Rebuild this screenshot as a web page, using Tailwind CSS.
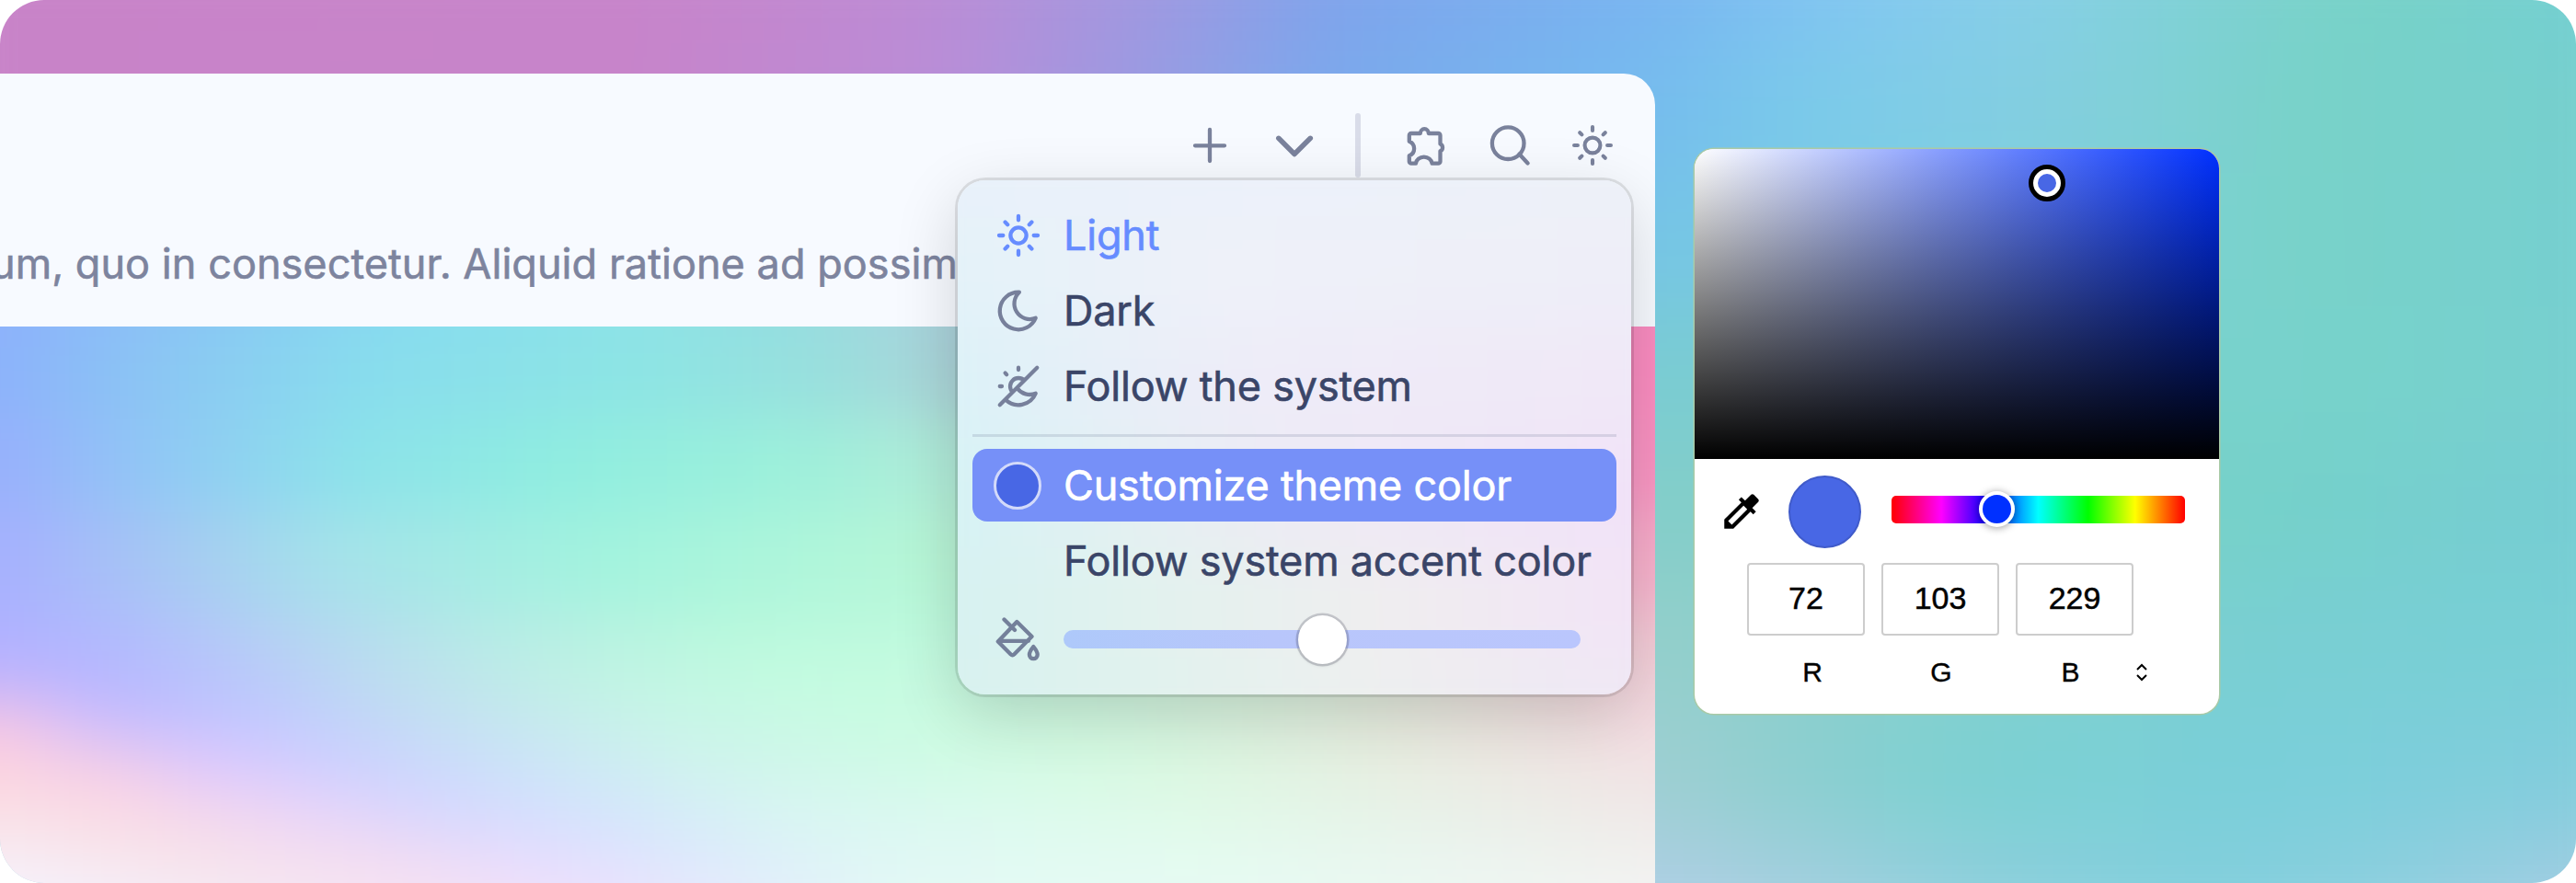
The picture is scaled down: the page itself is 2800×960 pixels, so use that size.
<!DOCTYPE html>
<html lang="en">
<head>
<meta charset="utf-8">
<title>Theme settings</title>
<script src="https://cdn.jsdelivr.net/npm/@tailwindcss/browser@4"></script>
</head>
<body class="bg-white">
<main class="relative isolate flex h-[960px] w-[2800px] items-start overflow-hidden rounded-[48px] font-['Inter','Liberation_Sans',sans-serif]">
  <!-- backdrop -->
  <div class="absolute -inset-[100px] -z-10 flex flex-col blur-[50px]">
    <div class="flex-1 bg-[linear-gradient(to_right,#c883c8_100px,#c784ca_800px,#bd8bd4_1100px,#a098e0_1350px,#7ea3ec_1550px,#78b4f1_1890px,#82c6f2_2100px,#87cfe8_2300px,#7ed1d4_2500px,#77d2c6_2660px,#74cfd2_2900px)]"></div>
    <div class="flex-1 bg-[linear-gradient(to_right,#c883c8_100px,#c784ca_800px,#b98dd8_1130px,#9b9ae2_1330px,#7aa9ec_1550px,#75bcee_1899px,#7acaea_2050px,#82cde4_2250px,#82d0d9_2400px,#78d2c8_2600px,#76cfce_2900px)]"></div>
    <div class="flex-1 bg-[linear-gradient(to_right,#c883c8_100px,#75c5e6_1899px,#7cd0e0_2200px,#7bd2d0_2500px,#78d2c8_2600px,#76cfd0_2900px)]"></div>
    <div class="flex-1 bg-[linear-gradient(to_right,#75c5e6_100px,#7accd2_1899px,#78d2cc_2500px,#77d2cb_2700px,#77cfd0_2900px)]"></div>
    <div class="flex-1 bg-[linear-gradient(to_right,#84cec8_100px,#84cec9_1899px,#75d1c9_2550px,#76cdd3_2900px)]"></div>
    <div class="flex-1 bg-[linear-gradient(to_right,#93cfcb_100px,#93cfcb_1899px,#79cfd2_2530px,#78cfd6_2900px)]"></div>
    <div class="flex-1 bg-[linear-gradient(to_right,#9fcfd2_100px,#9fcfd2_1899px,#8ccfcf_2050px,#7bd0d2_2250px,#7acfda_2600px,#82cddc_2900px)]"></div>
    <div class="flex-1 bg-[linear-gradient(to_right,#b0cfe6_100px,#b0cfe6_1899px,#a6cfe0_2050px,#90cfdd_2250px,#82cfdd_2500px,#8fcfdf_2700px,#a5cde3_2900px)]"></div>
  </div>

  <!-- application window -->
  <section class="relative mt-20 flex h-[880px] w-[1799px] shrink-0 flex-col overflow-hidden rounded-tr-[34px]">
    <header class="h-[275px] shrink-0 bg-[#f7faff]">
      <div class="flex h-[156px] items-center justify-end pr-[45px] text-[#7a829c]">
        <svg class="mr-[44px] size-12" viewBox="0 0 48 48" fill="none" stroke="currentColor" stroke-width="4.300" stroke-linecap="round"><path d="M24 7v34M8 24.300h32"/></svg>
        <svg class="mr-[42px] size-12" viewBox="0 0 48 48" fill="none" stroke="currentColor" stroke-width="5.500" stroke-linecap="round" stroke-linejoin="round"><path d="M6.800 16.300 24 33.500 41.300 16.300"/></svg>
        <div class="mr-[47px] h-[70px] w-[6px] rounded-full bg-[#d9dce9]"></div>
        <svg class="mr-[43px] size-12" viewBox="0 0 48 48" fill="none" stroke="currentColor" stroke-width="4.300" stroke-linejoin="round"><path d="M8 11H17.800a4.500 4.800 0 0 1 9 0H37.300a2.200 2.200 0 0 1 2.200 2.200V22.500a4 4.200 0 0 1 0 7.800V41.500a2.200 2.200 0 0 1-2.200 2.200H30.600a8.900 8 0 0 0-17.700 0H8a2.200 2.200 0 0 1-2.200-2.200V35.200a8.300 8.300 0 0 0 0-15.500V13.200A2.200 2.200 0 0 1 8 11Z"/></svg>
        <svg class="mr-[43px] size-12" viewBox="0 0 48 48" fill="none" stroke="currentColor" stroke-width="4.300" stroke-linecap="round"><circle cx="22.200" cy="21.700" r="17.300"/><path d="m34.400 33.500 9.200 10"/></svg>
        <svg class="size-[46px]" viewBox="0 0 48 48" fill="none" stroke="currentColor" stroke-width="4.300" stroke-linecap="round"><circle cx="24" cy="24" r="8.800"/><path d="M24 3.200v4M24 40.800v4M3.200 24h4M40.800 24h4M9.600 9.600l2.300 2.300M36.100 36.100l2.300 2.300M9.600 38.400l2.300-2.300M36.100 11.900l2.300-2.300"/></svg>
      </div>
      <p class="-ml-[10px] whitespace-nowrap text-[45px] leading-[102px] tracking-[0.05px] text-[#7d849e] [-webkit-text-stroke:0.6px_#7d849e]">um, quo in consectetur. Aliquid ratione ad possimus</p>
    </header>
    <div class="relative isolate flex-1 overflow-hidden">
      <div class="absolute -inset-[100px] -z-10 flex flex-col blur-[32px]">
        <div class="flex-2 bg-[linear-gradient(to_right,#8eb1fc_100px,#88c6f4_330px,#86dcf0_560px,#8ce2e8_790px,#94dce0_960px,#a8d2de_1120px,#d5a5c8_1500px,#f98bc0_1890px)]"></div>
        <div class="flex-2 bg-[linear-gradient(to_right,#8cb2fb_100px,#8bc4f4_250px,#88dded_500px,#8de5e4_800px,#99dfdd_1000px,#aad4d8_1130px,#d5a5c8_1500px,#fb8bc0_1890px)]"></div>
        <div class="flex-2 bg-[linear-gradient(to_right,#98b0fc_100px,#90c9f4_280px,#8ce2ea_480px,#8fede0_700px,#9cf0db_950px,#b0ecd8_1130px,#fa92c2_1890px)]"></div>
        <div class="flex-2 bg-[linear-gradient(to_right,#a6b0fe_100px,#a6c8f3_280px,#a5e2ea_460px,#a2f3de_750px,#b0f6da_1000px,#b8f6d6_1130px,#f8aecb_1890px)]"></div>
        <div class="flex-1 bg-[linear-gradient(to_right,#b0b1ff_100px,#b1bcfd_230px,#b4d2f3_400px,#b5ebe6_620px,#b8f8dc_880px,#befade_1130px,#cdf2d6_1500px,#f5c9d6_1890px)]"></div>
        <div class="flex-1 bg-[linear-gradient(to_right,#bab2ff_100px,#b4b5ff_200px,#b9c6fb_350px,#bcdcf0_500px,#bff2e4_720px,#c2fce0_950px,#c6fae0_1130px,#d8f2de_1500px,#f3d0da_1890px)]"></div>
        <div class="flex-1 bg-[linear-gradient(to_right,#f6c4e4_100px,#dabff9_170px,#c4bbff_240px,#c0caff_400px,#c4e0f2_580px,#c8f4e8_800px,#c9fce2_1050px,#d0f8e0_1300px,#e6ebdd_1600px,#f3dae0_1890px)]"></div>
        <div class="flex-1 bg-[linear-gradient(to_right,#fcd3de_100px,#f5cde8_220px,#dfc8fe_330px,#ccd0ff_480px,#cce2fa_650px,#d0f3ee_850px,#d0fbe6_1100px,#d8f8e0_1350px,#e7eee1_1600px,#f1e2e4_1890px)]"></div>
        <div class="flex-1 bg-[linear-gradient(to_right,#fae0e5_100px,#fad9e4_250px,#ebd4f8_430px,#d6d6ff_570px,#d3e4fd_750px,#d8f6f2_950px,#dcfbee_1200px,#e0fae8_1400px,#efe9e8_1890px)]"></div>
        <div class="flex-1 bg-[linear-gradient(to_right,#f7edf4_100px,#f7e3ea_300px,#f4dcf1_520px,#e6dcff_670px,#dce8fd_850px,#dff7f5_1050px,#e4fbf0_1400px,#f1f0ee_1890px)]"></div>
        <div class="flex-1 bg-[linear-gradient(to_right,#f5f4ff_100px,#f5eaf4_350px,#f6e2f2_580px,#eee0fd_750px,#e4f0fb_950px,#e4faf5_1100px,#e8faf3_1500px,#f3f4f3_1890px)]"></div>
        <div class="flex-1 bg-[linear-gradient(to_right,#f5f5ff_100px,#f6ecf6_400px,#f5e4f8_640px,#e8effb_900px,#e6faf6_1100px,#e8faf3_1500px,#f3f4f3_1890px)]"></div>
      </div>
    </div>

    <!-- theme menu -->
    <div class="absolute left-[1041px] top-[116px] isolate flex h-[559px] w-[732px] flex-col rounded-[30px] px-4 pt-5 text-[45px] leading-[79px] tracking-[-0.2px] text-[#3a4568] shadow-[0_0_0_3px_rgba(0,0,0,0.1),0_20px_70px_rgba(0,0,0,0.16)] [-webkit-text-stroke:0.6px_currentColor]">
      <div class="absolute inset-0 -z-10 overflow-hidden rounded-[30px]">
        <div class="absolute -inset-[80px] flex flex-col blur-[36px]">
          <div class="flex-1 bg-[linear-gradient(to_right,#e9f1fa_80px,#ecf1fa_450px,#edf1f8_810px)]"></div>
          <div class="flex-1 bg-[linear-gradient(to_right,#e4f2f9_80px,#eef1f9_350px,#eeeef8_810px)]"></div>
          <div class="flex-1 bg-[linear-gradient(to_right,#dcf2f8_80px,#e7eff8_240px,#eeecf8_400px,#f0e8f7_810px)]"></div>
          <div class="flex-1 bg-[linear-gradient(to_right,#d6f3f5_80px,#e4f0f3_260px,#eeeaf5_450px,#f1e2f8_810px)]"></div>
          <div class="flex-1 bg-[linear-gradient(to_right,#d7f2f1_80px,#e1f2ee_270px,#efeeef_530px,#f2e4f6_810px)]"></div>
          <div class="flex-1 bg-[linear-gradient(to_right,#d8f2ef_80px,#e0f2ee_270px,#edf0ef_520px,#efe8f5_810px)]"></div>
        </div>
      </div>
      <div class="flex h-[79px] items-center pl-[23px] text-[#668cff]">
        <svg class="mr-[22px] size-[54px]" viewBox="-3 -3 54 54" fill="none" stroke="currentColor" stroke-width="4.300" stroke-linecap="round"><circle cx="24" cy="24" r="8.600"/><path d="M24 3v4.300M24 40.700V45M3 24h4.300M40.700 24H45M9.600 9.600l2.600 2.600M35.800 35.800l2.600 2.600M9.600 38.400l2.600-2.600M35.800 12.200l2.600-2.600"/></svg>
        <span>Light</span>
      </div>
      <div class="mt-[3px] flex h-[79px] items-center pl-[23px]">
        <svg class="mr-[22px] size-[54px]" viewBox="0 0 24 24" fill="none" stroke="#77809b" stroke-width="1.900" stroke-linecap="round" stroke-linejoin="round"><path d="M12 3c.132 0 .263 0 .393 0a7.500 7.500 0 0 0 7.920 12.446a9 9 0 1 1 -8.313 -12.454z"/></svg>
        <span>Dark</span>
      </div>
      <div class="mt-[3px] flex h-[79px] items-center pl-[23px]">
        <svg class="mr-[22px] size-[54px]" viewBox="0 0 24 24" fill="none" stroke="#77809b" stroke-width="1.900" stroke-linecap="round" stroke-linejoin="round"><path d="M9.173 14.830a4 4 0 1 1 5.657 -5.657M11.294 12.707l.174 .247a7.500 7.500 0 0 0 8.845 2.492a9 9 0 0 1 -14.671 2.914M3 12h1M12 3v1M5.600 5.600l.7 .7M3 21l18 -18"/></svg>
        <span>Follow the system</span>
      </div>
      <div class="mt-[13px] h-[3px] shrink-0 bg-[#3a4568]/14"></div>
      <div class="mt-[13px] flex h-[79px] items-center rounded-2xl bg-[#7690f8] pl-[23px] text-white">
        <div class="mr-[24px] size-[52px] rounded-full border-[3px] border-[#d3dafa] bg-[#4867e5]"></div>
        <span>Customize theme color</span>
      </div>
      <div class="mt-[3px] flex h-[79px] items-center pl-[99px]">
        <span class="whitespace-nowrap">Follow system accent color</span>
      </div>
      <div class="mt-[5px] flex h-[82px] items-center pl-[25px]">
        <svg class="mr-[26px] size-12" viewBox="0 0 48 48" fill="none" stroke="#74809a" stroke-width="4.300" stroke-linecap="round" stroke-linejoin="round"><path d="m9.500 2.500 11.500 11.500M23.300 5 39.500 21 20.500 40.200q-2 2-4 0L2.800 26.500zM3.500 25.800H36"/><path d="M41.300 32q-4.400 5.300-4.400 8.800a4.400 4.400 0 0 0 8.800 0q0-3.500-4.400-8.800z"/></svg>
        <div class="flex h-5 w-[562px] items-center justify-center rounded-full bg-[linear-gradient(to_right,#aec9fa,#b8c6fb_40%,#bac6fd)]">
          <div class="size-[53px] shrink-0 rounded-full bg-white shadow-[0_0_0_2.500px_rgba(60,60,80,0.22),0_1px_4px_rgba(0,0,0,0.15)]"></div>
        </div>
      </div>
    </div>
  </section>

  <!-- colour picker -->
  <section class="ml-[43px] mt-[162px] flex h-[614px] w-[570px] flex-col rounded-[21px] bg-white font-['Liberation_Sans',Arial,sans-serif] text-black shadow-[0_0_0_1.500px_#a9caa6]">
    <div class="relative h-[337px] rounded-t-[21px] bg-[linear-gradient(to_top,#000,transparent),linear-gradient(to_right,#fff,#0030ff)]">
      <div class="absolute left-[363px] top-[17px] size-[40px] rounded-full border-[5px] border-black bg-white p-[5px]"><div class="size-full rounded-full bg-[#4867e5]"></div></div>
    </div>
    <div class="mt-[17px] flex h-[80px] pl-[26px]">
      <svg class="mt-[15px] size-[50px]" viewBox="0 0 24 24" fill="#000"><path d="M20.710 5.630l-2.340-2.340c-.39-.39-1.020-.39-1.410 0l-3.120 3.120-1.930-1.910-1.410 1.410 1.420 1.420L3 16.250V21h4.750l8.920-8.920 1.420 1.420 1.410-1.410-1.920-1.920 3.120-3.120c.4-.4.4-1.030.01-1.420zM6.920 19L5 17.080l8.060-8.060 1.920 1.920L6.920 19z"/></svg>
      <div class="ml-[26px] mt-px size-[79px] rounded-full border-2 border-[#405bca] bg-[#4867e5]"></div>
      <div class="relative ml-[33px] mt-[23px] h-[30px] w-[319px] rounded-[5px] bg-[linear-gradient(to_left,#f00,#ff0_17%,#0f0_33%,#0ff_50%,#00f_67%,#f0f_83%,#f00)]">
        <div class="absolute left-[95px] top-[-5px] size-[39px] rounded-full border-[4.500px] border-white bg-[#0030ff] shadow-[0_1px_8px_rgba(0,0,0,0.4)]"></div>
      </div>
    </div>
    <div class="mt-[16px] flex gap-[18px] pl-[57px] text-[34px] [-webkit-text-stroke:0.5px_#000]">
      <div class="flex h-[79px] w-[128px] items-center justify-center rounded-[4px] border-2 border-[#cdcdcd] pb-[2px]">72</div>
      <div class="flex h-[79px] w-[128px] items-center justify-center rounded-[4px] border-2 border-[#cdcdcd] pb-[2px]">103</div>
      <div class="flex h-[79px] w-[128px] items-center justify-center rounded-[4px] border-2 border-[#cdcdcd] pb-[2px]">229</div>
    </div>
    <div class="mt-[18px] flex h-[42px] items-center pl-[58px] text-[30px] [-webkit-text-stroke:0.4px_#000]">
      <span class="w-[140px] text-center">R</span>
      <span class="w-[140px] text-center">G</span>
      <span class="w-[141px] text-center">B</span>
      <svg class="mt-[2px] h-5 w-[14px]" viewBox="0 0 14 20" fill="none" stroke="#000" stroke-width="2"><path d="M2 7l5-5 5 5M2 13l5 5 5-5"/></svg>
    </div>
  </section>
</main>
</body>
</html>
